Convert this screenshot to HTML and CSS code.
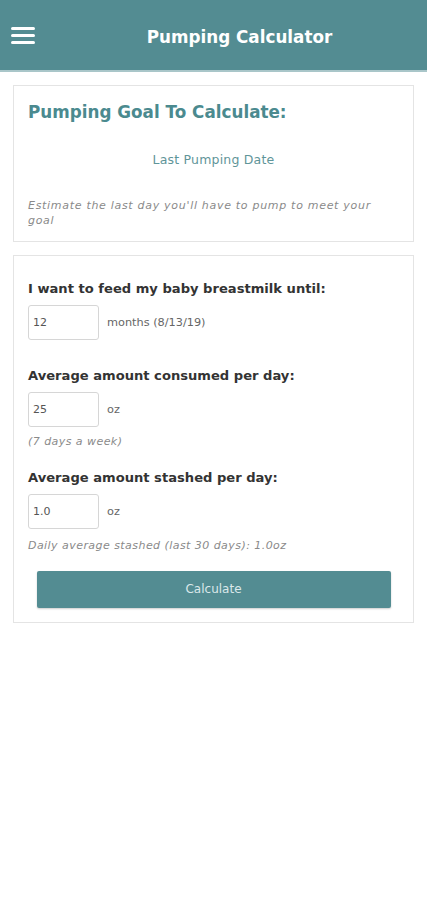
FILE: index.html
```html
<!DOCTYPE html>
<html>
<head>
<meta charset="utf-8">
<link rel="stylesheet" href="styles.css">
</head>
<body>
<header class="topbar">
  <div class="menu">
    <svg width="24" height="17" viewBox="0 0 24 17"><rect x="0" y="0" width="24" height="3" rx="1.5" fill="#fff"/><rect x="0" y="7" width="24" height="3" rx="1.5" fill="#fff"/><rect x="0" y="14" width="24" height="3" rx="1.5" fill="#fff"/></svg>
  </div>
  <h1 class="title">Pumping Calculator</h1>
</header>
<main class="content">
  <section class="card goal">
    <h2 class="goal-title">Pumping Goal To Calculate:</h2>
    <div class="goal-option">Last Pumping Date</div>
    <p class="goal-note">Estimate the last day you'll have to pump to meet your goal</p>
  </section>
  <section class="card form">
    <div class="field">
      <div class="label">I want to feed my baby breastmilk until:</div>
      <div class="row"><div class="input">12</div><span class="unit">months (8/13/19)</span></div>
    </div>
    <div class="field">
      <div class="label">Average amount consumed per day:</div>
      <div class="row"><div class="input">25</div><span class="unit">oz</span></div>
      <div class="hint">(7 days a week)</div>
    </div>
    <div class="field">
      <div class="label">Average amount stashed per day:</div>
      <div class="row"><div class="input">1.0</div><span class="unit">oz</span></div>
      <div class="hint">Daily average stashed (last 30 days): 1.0oz</div>
    </div>
    <button class="calc">Calculate</button>
  </section>
</main>
</body>
</html>
```
FILE: styles.css
```css
* { box-sizing: border-box; }
html, body { margin: 0; padding: 0; background: #fff; }
body { font-family: "DejaVu Sans", "Open Sans", sans-serif; color: #333; }
.topbar {
  height: 72px;
  background: #538c92;
  border-bottom: 2px solid #a9c6c9;
  display: flex;
  align-items: center;
  position: relative;
  padding-left: 11px;
}
.menu { display: flex; margin-top: 1px; }
.title {
  position: absolute;
  left: 0; right: 0;
  top: 26px;
  line-height: 22px;
  text-align: center;
  margin: 0;
  color: #fff;
  font-size: 16.8px;
  font-weight: bold;
  padding-left: 52px;
}
.content { padding: 13px 13px; display: flex; flex-direction: column; gap: 13px; }
.card { border: 1.5px solid #e4e4e4; background: #fff; }
.goal { padding: 15.5px 14px 0 14px; height: 157px; }
.goal-title { margin: 0; color: #4b8a8f; font-size: 16.8px; line-height: 20px; font-weight: bold; }
.goal-option { text-align: center; color: #5f9599; font-size: 12.5px; line-height: 16px; margin-top: 30px; letter-spacing: 0.2px; }
.goal-note { margin: 30px 0 0 0; max-width: 350px; font-style: italic; color: #8a8a8a; font-size: 11px; line-height: 15px; letter-spacing: 0.7px; }
.form { padding: 24.5px 14px 14px 14px; display: flex; flex-direction: column; }
.field { margin-bottom: 28px; }
.field:nth-child(2) { margin-bottom: 21px; }
.field:nth-child(3) { margin-bottom: 18px; }
.label { font-weight: bold; font-size: 13.1px; line-height: 16px; color: #333; margin-bottom: 8px; }
.row { display: flex; align-items: center; gap: 8px; }
.input {
  width: 71px; height: 35px;
  border: 1.5px solid #d6d6d6;
  border-radius: 3px;
  font-size: 11px;
  color: #555;
  padding-left: 4px;
  display: flex; align-items: center;
}
.unit { font-size: 11.3px; color: #666; }
.hint { font-style: italic; font-size: 11px; line-height: 14px; color: #8a8a8a; margin-top: 8px; letter-spacing: 0.45px; }
.field:nth-child(3) .hint { margin-top: 10px; }
.calc {
  align-self: center;
  width: 354px; height: 37px;
  background: #538c92;
  border: none;
  border-radius: 2px;
  color: #dbe8ea;
  font-family: inherit;
  font-size: 12px;
  box-shadow: 0 1px 2px rgba(0,0,0,0.2);
}
```
